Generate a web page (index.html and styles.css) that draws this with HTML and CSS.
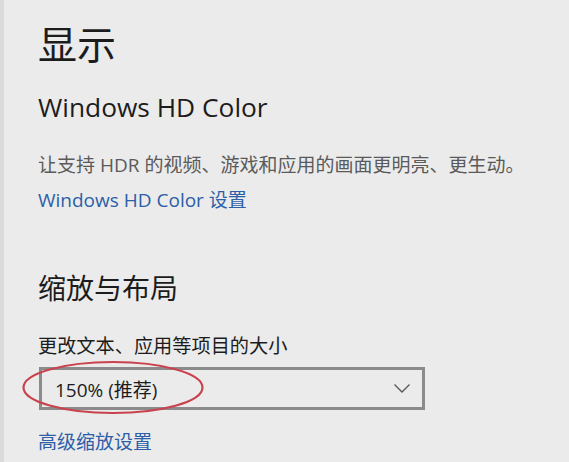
FILE: index.html
```html
<!DOCTYPE html>
<html lang="zh-CN">
<head>
<meta charset="utf-8">
<link rel="stylesheet" href="styles.css">
</head>
<body>
<div class="page">
  <div class="content">
    <h1 class="title">显示</h1>
    <h2 class="subtitle">Windows HD Color</h2>
    <p class="desc">让支持 HDR 的视频、游戏和应用的画面更明亮、更生动。</p>
    <a class="link link-hd">Windows HD Color 设置</a>
    <h2 class="section">缩放与布局</h2>
    <p class="label">更改文本、应用等项目的大小</p>
    <div class="select-wrap">
      <div class="select">
        <span class="select-text">150% (推荐)</span>
        <svg class="chevron" width="16" height="9" viewBox="0 0 16 9"><path d="M0.5 0.5 L8 8 L15.5 0.5" fill="none" stroke="#555" stroke-width="1.3"/></svg>
      </div>
      <svg class="circle" width="184" height="55" viewBox="0 0 184 55"><ellipse cx="92" cy="27.5" rx="89.5" ry="25.5" fill="none" stroke="#c9434e" stroke-width="2.2"/></svg>
    </div>
    <a class="link link-adv">高级缩放设置</a>
  </div>
</div>
</body>
</html>
```
FILE: styles.css
```css
html, body {
  margin: 0;
  padding: 0;
  background: #ebebeb;
}
.page {
  width: 569px;
  height: 462px;
  overflow: hidden;
  display: flex;
  background: #ebebeb;
  border-left: 4px solid #dadada;
  box-sizing: border-box;
  font-family: "Open Sans", "Noto Sans CJK SC", sans-serif;
  color: #1c1c1c;
}
.content {
  padding-left: 34px;
  display: flex;
  flex-direction: column;
  align-items: flex-start;
}
.title {
  margin: 17px 0 0;
  font-size: 39px;
  line-height: 51px;
  font-weight: 400;
  font-family: "Noto Sans CJK SC", sans-serif;
}
.subtitle {
  margin: 21px 0 0;
  font-size: 26.3px;
  line-height: 36px;
  font-weight: 400;
}
.desc {
  margin: 26px 0 0;
  font-size: 19px;
  line-height: 28px;
  color: #5a5a5a;
}
.link {
  font-size: 19px;
  line-height: 28px;
  color: #2d5ea8;
}
.link-hd {
  margin-top: 7px;
}
.section {
  margin: 53px 0 0;
  font-size: 28px;
  line-height: 40px;
  font-weight: 400;
  font-family: "Noto Sans CJK SC", sans-serif;
}
.label {
  margin: 25px 0 0;
  font-size: 19.2px;
  line-height: 28px;
}
.select-wrap {
  position: relative;
  margin-top: 7px;
  margin-left: 1px;
}
.select {
  width: 386px;
  height: 43px;
  box-sizing: border-box;
  border: 3px solid #8b8b8b;
  display: flex;
  align-items: center;
  justify-content: space-between;
  padding: 0 12px 0 13px;
  font-size: 19px;
}
.chevron {
  display: block;
}
.circle {
  position: absolute;
  left: -18px;
  top: -7px;
}
.link-adv {
  margin-top: 18px;
}
```
